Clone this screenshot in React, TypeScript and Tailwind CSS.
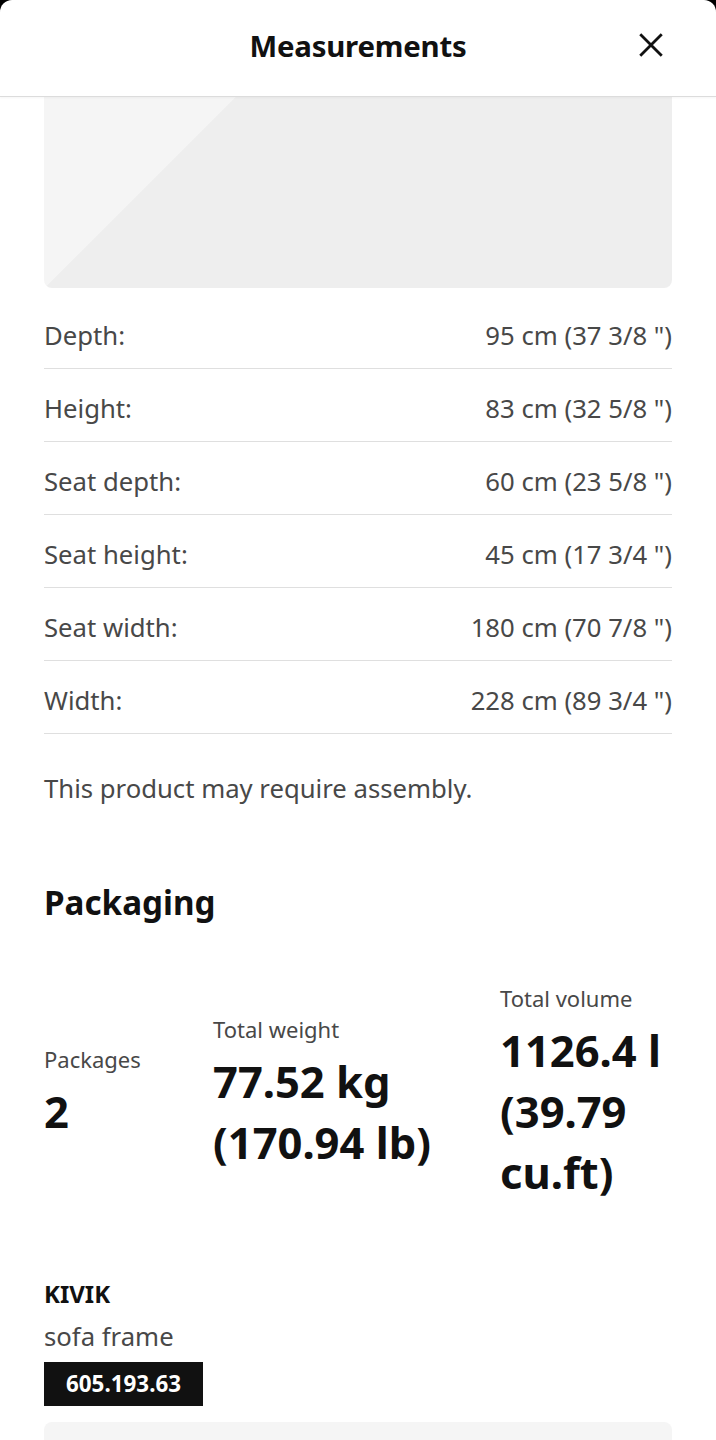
const measurements = [
  { label: "Depth:", value: '95 cm (37 3/8 ")' },
  { label: "Height:", value: '83 cm (32 5/8 ")' },
  { label: "Seat depth:", value: '60 cm (23 5/8 ")' },
  { label: "Seat height:", value: '45 cm (17 3/4 ")' },
  { label: "Seat width:", value: '180 cm (70 7/8 ")' },
  { label: "Width:", value: '228 cm (89 3/4 ")' },
];

function CloseIcon() {
  return (
    <svg width="26" height="26" viewBox="0 0 24 24" fill="none" aria-hidden="true">
      <path d="M3 3L21 21M21 3L3 21" stroke="#111111" strokeWidth="2.6" strokeLinecap="square" />
    </svg>
  );
}

function Stat({ label, lines }: { label: string; lines: string[] }) {
  return (
    <div className="flex flex-col">
      <span className="text-[22px] leading-[33px] text-[#484848]">{label}</span>
      <div className="mt-[5px] text-[43.5px] font-bold leading-[61px] text-[#111111]">
        {lines.map((l) => (
          <div key={l}>{l}</div>
        ))}
      </div>
    </div>
  );
}

export default function App() {
  return (
    <div className="min-h-screen bg-black" style={{ fontFamily: '"Noto Sans", "Open Sans", sans-serif' }}>
      <div className="min-h-screen overflow-hidden rounded-t-[12px] bg-white">
        {/* sheet header */}
        <header className="relative flex h-[97px] items-center justify-center border-b border-[#dcdcdc] shadow-[0_1px_2px_rgba(0,0,0,0.04)]">
          <h1 className="-mt-[4px] text-[29.4px] font-bold tracking-[-0.2px] text-[#111111]">Measurements</h1>
          <button className="absolute right-[52px] top-[32px] flex h-[26px] w-[26px] items-center justify-center">
            <CloseIcon />
          </button>
        </header>

        <div className="px-[44px]">
          {/* product image placeholder, scrolled under the header */}
          <div className="h-[191px] rounded-b-[8px] bg-[linear-gradient(135deg,#f5f5f5_0_135px,#eeeeee_136px)]" />

          <dl className="mt-[8px]">
            {measurements.map((m) => (
              <div
                key={m.label}
                className="flex items-center justify-between border-b border-[#dfdfdf] pb-[14px] pt-[22px] text-[25.7px] leading-[36px] text-[#484848]"
              >
                <dt>{m.label}</dt>
                <dd>{m.value}</dd>
              </div>
            ))}
          </dl>

          <p className="mt-[37px] text-[25.7px] leading-[36px] text-[#484848]">This product may require assembly.</p>

          <h2 className="mt-[74px] text-[33.2px] font-bold leading-[44px] text-[#111111]">Packaging</h2>

          <div className="mt-[57px] grid grid-cols-[169px_287px_172px] items-center">
            <Stat label="Packages" lines={["2"]} />
            <Stat label="Total weight" lines={["77.52 kg", "(170.94 lb)"]} />
            <Stat label="Total volume" lines={["1126.4 l", "(39.79", "cu.ft)"]} />
          </div>

          <div className="mt-[73px]">
            <p className="text-[24px] font-bold leading-[36px] text-[#111111]">KIVIK</p>
            <p className="mt-[7px] text-[25.7px] leading-[36px] text-[#484848]">sofa frame</p>
            <span className="mt-[7px] inline-flex h-[44px] items-center bg-[#111111] px-[22px] text-[22.4px] font-bold text-white">
              605.193.63
            </span>
          </div>

          <div className="mt-[16px] h-[240px] rounded-t-[8px] bg-[#f5f5f5]" />
        </div>
      </div>
    </div>
  );
}
